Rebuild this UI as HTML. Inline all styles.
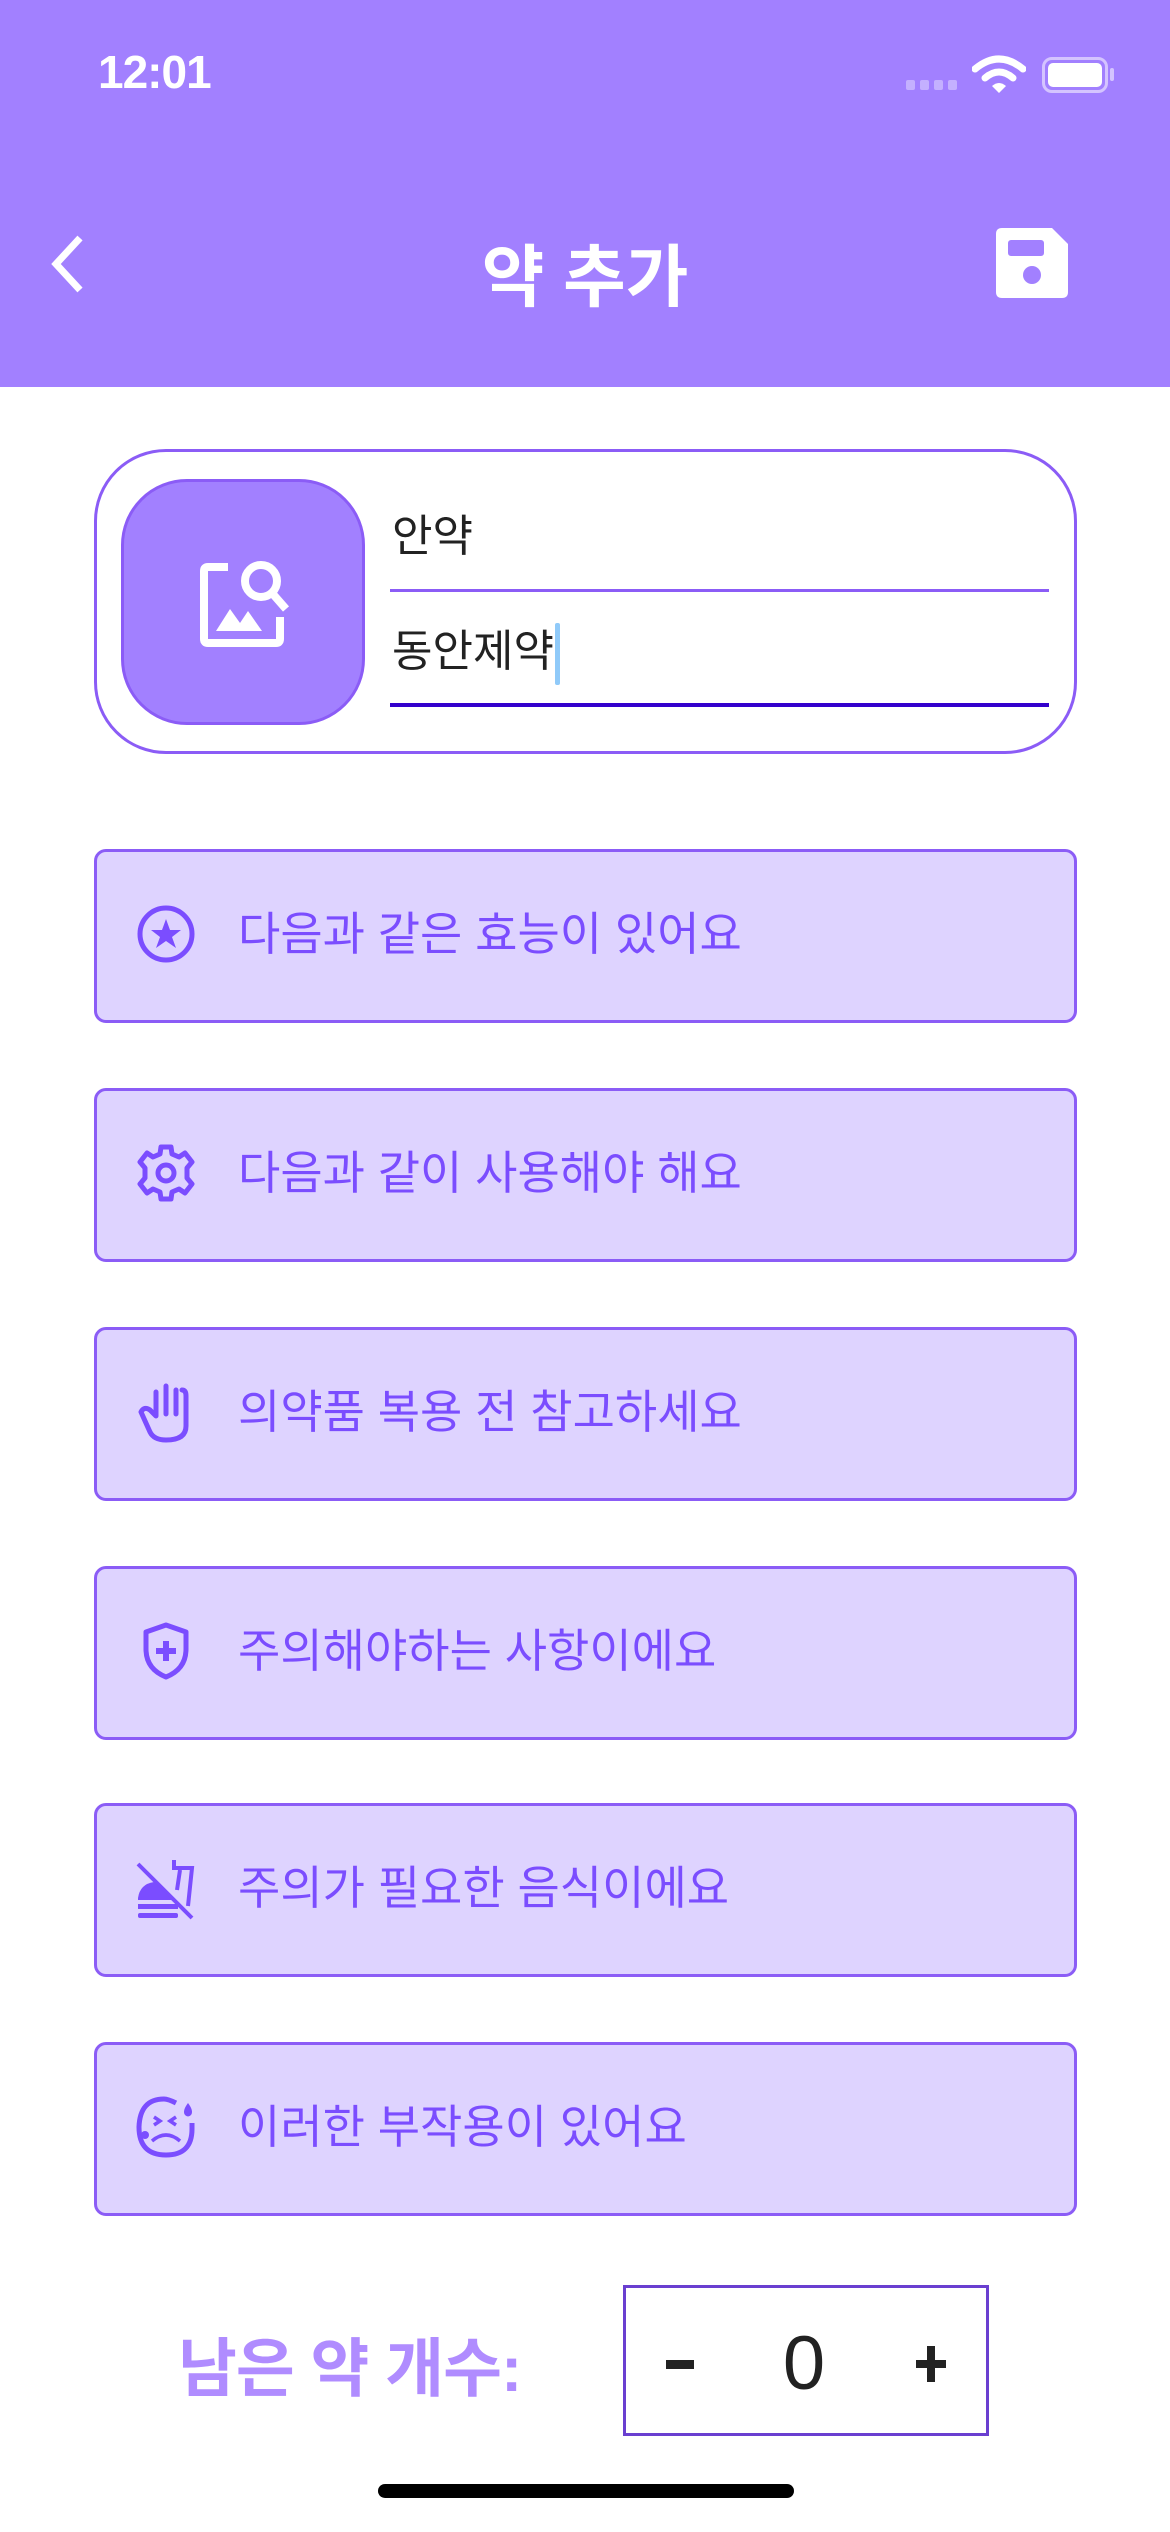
<!DOCTYPE html>
<html><head><meta charset="utf-8">
<style>
*{margin:0;padding:0;box-sizing:border-box}
body{width:1170px;height:2532px;background:#fff;position:relative;overflow:hidden;font-family:"Liberation Sans","Noto Sans CJK KR",sans-serif}
.hdr{position:absolute;left:0;top:0;width:1170px;height:387px;background:#A280FF}
.time{position:absolute;left:98px;top:45px;font-size:46px;font-weight:bold;color:#fff;letter-spacing:-1px}
.title{position:absolute;left:0;width:1170px;top:222px;text-align:center;font-size:68px;font-weight:bold;color:#fff}
.card{position:absolute;left:94px;top:449px;width:983px;height:305px;border:3px solid #8B5CF6;border-radius:72px}
.imgbox{position:absolute;left:121px;top:479px;width:244px;height:246px;background:#A280FF;border:3px solid #8B5CF6;border-radius:66px}
.f{position:absolute;left:392px;font-size:44px;color:#222}
.ul{position:absolute;left:390px;width:659px}
.row{position:absolute;left:94px;width:983px;height:174px;background:#DED3FF;border:3px solid #8B5CF6;border-radius:12px}
.row svg{position:absolute;left:37px;top:50px;width:64px;height:64px}
.row span{position:absolute;left:141px;top:0;line-height:164px;font-size:46px;color:#7B4DFF}
.lbl{position:absolute;left:178px;top:2318px;font-size:64px;font-weight:bold;color:#B08CFF;letter-spacing:-1px}
.box{position:absolute;left:623px;top:2285px;width:366px;height:151px;border:3px solid #6A3FD0}
.home{position:absolute;left:378px;top:2484px;width:416px;height:14px;background:#000;border-radius:7px}
</style></head><body>
<div class="hdr">
<div class="time">12:01</div>
<div style="position:absolute;left:906px;top:80px;width:56px;height:10px">
<div style="position:absolute;left:0;width:9px;height:10px;background:#c4b0ff;border-radius:2px"></div>
<div style="position:absolute;left:14px;width:9px;height:10px;background:#c4b0ff;border-radius:2px"></div>
<div style="position:absolute;left:28px;width:9px;height:10px;background:#c4b0ff;border-radius:2px"></div>
<div style="position:absolute;left:42px;width:9px;height:10px;background:#c4b0ff;border-radius:2px"></div>
</div>
<svg style="position:absolute;left:972px;top:55px" width="54" height="40" viewBox="0 0 54 40"><path d="M3 14 Q27 -6 51 14" stroke="#fff" stroke-width="7" fill="none" stroke-linecap="round"/><path d="M13 23 Q27 11 41 23" stroke="#fff" stroke-width="7" fill="none" stroke-linecap="round"/><path d="M20 31 L27 38 L34 31 Q27 25 20 31Z" fill="#fff"/></svg>
<div style="position:absolute;left:1042px;top:57px;width:66px;height:36px;border:3px solid #d4c4ff;border-radius:10px"><div style="position:absolute;left:3px;top:3px;width:54px;height:24px;background:#fff;border-radius:5px"></div></div>
<div style="position:absolute;left:1110px;top:68px;width:4px;height:13px;background:#d4c4ff;border-radius:2px"></div>
<svg style="position:absolute;left:44px;top:234px" width="44" height="60" viewBox="0 0 44 60"><path d="M36 4 L12 30 L36 56" stroke="#fff" stroke-width="7" fill="none"/></svg>
<div class="title">약 추가</div>
<svg style="position:absolute;left:996px;top:228px" width="72" height="70" viewBox="0 0 72 70"><path d="M6 0 H56 L72 16 V64 Q72 70 66 70 H6 Q0 70 0 64 V6 Q0 0 6 0Z" fill="#fff"/><rect x="12" y="12" width="36" height="16" rx="3" fill="#A280FF"/><circle cx="36" cy="47" r="9" fill="#A280FF"/></svg>
</div>
<div class="card"></div>
<div class="imgbox">
<svg style="position:absolute;left:76px;top:73px" width="94" height="94" viewBox="0 0 94 94"><path d="M28 12 H8 Q4 12 4 16 V84 Q4 88 8 88 H76 Q80 88 80 84 V62" stroke="#fff" stroke-width="8" fill="none"/><circle cx="61" cy="26" r="16" stroke="#fff" stroke-width="8" fill="none"/><path d="M72 38 L86 54" stroke="#fff" stroke-width="8"/><path d="M16 76 L30 54 L40 68 L48 56 L62 76Z" fill="#fff"/></svg>
</div>
<div class="f" style="top:500px">안약</div>
<div class="ul" style="top:589px;height:3px;background:#8B5CF6"></div>
<div class="f" style="top:615px">동안제약<span style="display:inline-block;width:5px;height:62px;background:#90CAF9;vertical-align:middle;margin-left:1px;border-radius:2px"></span></div>
<div class="ul" style="top:703px;height:4px;background:#3300CC"></div>

<div class="row" style="top:849px"><svg viewBox="0 0 64 64"><circle cx="32" cy="32" r="26" stroke="#7B4DFF" stroke-width="5" fill="none"/><path d="M32 17 L36 28 L47 28 L38 35 L42 46 L32 39 L22 46 L26 35 L17 28 L28 28Z" fill="#7B4DFF"/></svg><span>다음과 같은 효능이 있어요</span></div>
<div class="row" style="top:1088px"><svg viewBox="0 0 64 64"><path d="M27 6 H37 L38 13 L45 16 L51 12 L58 21 L53 27 L53 37 L58 43 L51 52 L45 48 L38 51 L37 58 H27 L26 51 L19 48 L13 52 L6 43 L11 37 L11 27 L6 21 L13 12 L19 16 L26 13Z" stroke="#7B4DFF" stroke-width="5" fill="none" stroke-linejoin="round"/><circle cx="32" cy="32" r="8" stroke="#7B4DFF" stroke-width="5" fill="none"/></svg><span>다음과 같이 사용해야 해요</span></div>
<div class="row" style="top:1327px"><svg viewBox="0 0 64 64"><path d="M22 36 V12 M32 34 V6 M42 34 V10 M52 36 V16 Q52 10 48 10 M22 36 L16 30 Q10 26 7 32 L16 52 Q20 60 32 60 Q52 60 52 46 V36" stroke="#7B4DFF" stroke-width="5" fill="none" stroke-linecap="round" stroke-linejoin="round"/></svg><span>의약품 복용 전 참고하세요</span></div>
<div class="row" style="top:1566px"><svg viewBox="0 0 64 64"><path d="M32 6 L52 13 V30 Q52 50 32 58 Q12 50 12 30 V13Z" stroke="#7B4DFF" stroke-width="5" fill="none" stroke-linejoin="round"/><path d="M32 22 V42 M22 32 H42" stroke="#7B4DFF" stroke-width="6"/></svg><span>주의해야하는 사항이에요</span></div>
<div class="row" style="top:1803px"><svg viewBox="0 0 64 64"><path d="M4 8 L58 62" stroke="#7B4DFF" stroke-width="4"/><path d="M4 42 Q6 28 20 26 L38 44 H4Z" fill="#7B4DFF"/><rect x="4" y="48" width="40" height="5" fill="#7B4DFF"/><rect x="4" y="57" width="40" height="5" rx="2" fill="#7B4DFF"/><path d="M40 4 V12 H58 L54 50 M46 14 L43 34" stroke="#7B4DFF" stroke-width="4" fill="none"/></svg><span>주의가 필요한 음식이에요</span></div>
<div class="row" style="top:2042px"><svg viewBox="0 0 64 64"><path d="M42 8 Q34 4 30 4 Q6 4 5 32 Q5 60 32 60 Q58 60 58 34 V28" stroke="#7B4DFF" stroke-width="5" fill="none"/><path d="M54 8 Q48 16 51 20 Q54 23 57 20 Q60 16 54 8Z" fill="#7B4DFF"/><path d="M20 22 L26 26 L20 30 M42 22 L36 26 L42 30 M18 46 Q32 34 46 46" stroke="#7B4DFF" stroke-width="3.5" fill="none"/><circle cx="11" cy="40" r="4" fill="#7B4DFF"/></svg><span>이러한 부작용이 있어요</span></div>

<div class="lbl">남은 약 개수:</div>
<div class="box">
<div style="position:absolute;left:40px;top:72px;width:28px;height:9px;background:#222"></div>
<div style="position:absolute;left:0;width:100%;top:32px;text-align:center;font-size:76px;color:#222;margin-left:-2px">0</div>
<div style="position:absolute;left:290px;top:72px;width:30px;height:8px;background:#222"></div>
<div style="position:absolute;left:301px;top:58px;width:8px;height:36px;background:#222"></div>
</div>
<div class="home"></div>
</body></html>
